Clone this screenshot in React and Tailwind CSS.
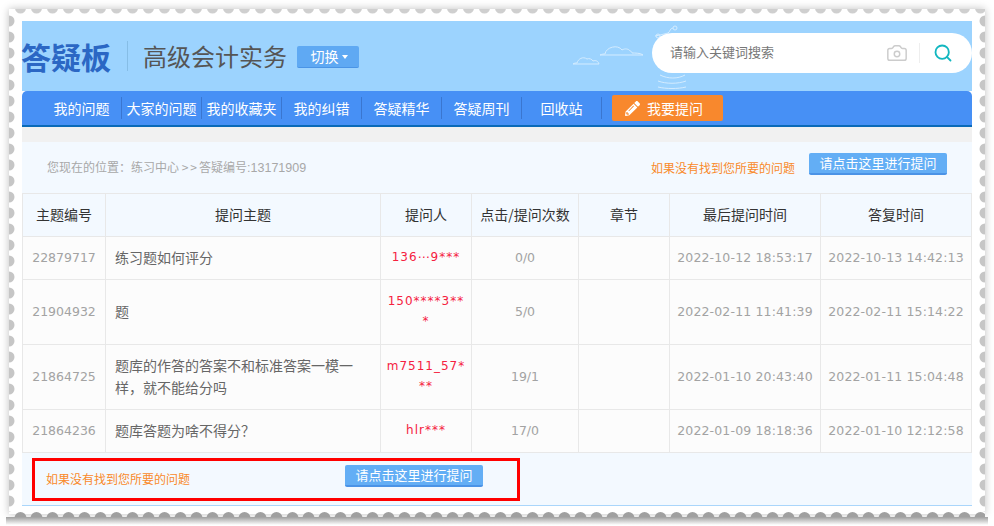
import { Camera, Search } from 'lucide-react';
import { FaPencilAlt } from 'react-icons/fa';

const navItems = ['我的问题', '大家的问题', '我的收藏夹', '我的纠错', '答疑精华', '答疑周刊', '回收站'];

const rows = [
  { id: '22879717', subject: '练习题如何评分', name: '136⋯9***', count: '0/0', asked: '2022-10-12 18:53:17', replied: '2022-10-13 14:42:13', height: 'h-[43px]' },
  { id: '21904932', subject: '题', name: '150****3***', count: '5/0', asked: '2022-02-11 11:41:39', replied: '2022-02-11 15:14:22', height: 'h-[65px]' },
  { id: '21864725', subject: '题库的作答的答案不和标准答案一模一样，就不能给分吗', name: 'm7511_57***', count: '19/1', asked: '2022-01-10 20:43:40', replied: '2022-01-11 15:04:48', height: 'h-[65px]' },
  { id: '21864236', subject: '题库答题为啥不得分？', name: 'hlr***', count: '17/0', asked: '2022-01-09 18:18:36', replied: '2022-01-10 12:12:58', height: 'h-[43px]' },
];

const headers = [
  ['主题编号', 'w-[83px]'],
  ['提问主题', 'w-[275px]'],
  ['提问人', 'w-[91px]'],
  ['点击/提问次数', 'w-[107px]'],
  ['章节', 'w-[91px]'],
  ['最后提问时间', 'w-[151px]'],
  ['答复时间', 'w-[151px]'],
];

function AskButton() {
  return (
    <a className="flex h-[22px] w-[138px] items-center justify-center rounded-[2px] border-b-2 border-[#4b93e6] bg-[#63aef5] text-[13px] text-white">
      请点击这里进行提问
    </a>
  );
}

// stamp edge around the screenshot
function StampFrame() {
  const across = Array.from({ length: 61 }, (_, i) => 20.5 + i * 16);
  const down = Array.from({ length: 32 }, (_, i) => 21 + i * 16);
  return (
    <svg className="pointer-events-none absolute inset-0" width="994" height="526">
      <defs>
        <linearGradient id="shade" x1="0" y1="0" x2="0" y2="1">
          <stop offset="0" stopColor="#a0a0a0" />
          <stop offset="1" stopColor="#ffffff" />
        </linearGradient>
        <clipPath id="top"><rect x="9" y="9" width="976" height="8" /></clipPath>
        <clipPath id="side"><rect x="9" y="9" width="976" height="503" /></clipPath>
        <clipPath id="bottom"><rect x="9" y="510" width="976" height="7.5" /></clipPath>
      </defs>
      <g clipPath="url(#top)">
        {across.map((x) => <circle key={x} cx={x} cy="8" r="5.5" fill="#cfcfcf" />)}
      </g>
      <g clipPath="url(#side)">
        {down.map((y) => <circle key={y} cx="9" cy={y} r="5.5" fill="#c6c6c6" />)}
        {down.map((y) => <circle key={y} cx="985" cy={y} r="5.5" fill="#c6c6c6" />)}
      </g>
      <g clipPath="url(#bottom)">
        {across.map((x) => <circle key={x} cx={x} cy="518" r="6" fill="#a0a0a0" />)}
      </g>
      <rect x="6" y="517" width="982" height="8" fill="url(#shade)" />
    </svg>
  );
}

export default function App() {
  return (
    <div className="relative h-[526px] w-[994px] overflow-hidden bg-white font-['Noto_Sans_CJK_SC',sans-serif] text-[14px]">
      <div className="absolute left-[9px] top-[9px] h-[505px] w-[976px] shadow-[0_0_8px_rgba(0,0,0,0.25)]" />
      <div className="relative ml-[22px] w-[950px] pt-[21px]">
        <header className="relative flex h-[70px] items-center bg-[#9cd3fe]">
          <svg className="absolute left-[550px] top-[2px]" width="130" height="68" fill="none" stroke="#d4ecff" strokeWidth="1">
            <path d="M1 41c1-1 3-1 4-1 1-4 6-7 10-4 2-1 5 0 6 2 3-1 5 0 6 3z" />
            <path d="M28 32c2-1 4-1 5-1 1-7 13-10 17-4 3-2 7-1 8 1 1 0 2 1 2 2 3 0 9 0 11 2z" />
            <path d="M83 13l5-1 8-2c2-1 2-5 5-5M121 14l6-1M88 52c8 4 18 4 25 0M86 58c8 3 20 3 28 0M86 64c8 2 20 2 28 0" />
            <circle cx="86" cy="13" r="2" />
            <circle cx="103" cy="5" r="2" />
          </svg>
          <h1 className="ml-[-1px] text-[30px] font-bold leading-none text-[#2b67c4]">答疑板</h1>
          <span className="ml-[16px] h-[30px] w-px bg-[#86bde6]" />
          <span className="ml-[15px] text-[24px] leading-none text-[#555]">高级会计实务</span>
          <button className="ml-[10px] mt-[2px] flex h-[22px] w-[62px] items-center justify-center gap-[3px] rounded-[2px] border-b border-[#4a94e6] bg-[#5fa9f3] pl-[2px] text-[14px] text-white">
            切换
            <span className="h-0 w-0 border-x-[3.5px] border-t-[4px] border-x-transparent border-t-white" />
          </button>
          <div className="relative mb-[6px] ml-auto flex h-[40px] w-[320px] items-center rounded-[20px] bg-white pl-[18px] pr-[19px]">
            <span className="mb-[2px] text-[13px] text-[#777]">请输入关键词搜索</span>
            <Camera className="ml-auto mr-[-1px] text-[#cccccc]" size={22} strokeWidth={1.6} />
            <span className="ml-[12px] mr-[13px] h-[20px] w-px bg-[#eeeeee]" />
            <Search className="text-[#12b7c0]" size={20} strokeWidth={2.2} />
          </div>
        </header>

        <nav className="flex h-[36px] items-center rounded-t-[5px] border-b-2 border-[#0a6ab8] bg-[#4790f5] pl-[20px]">
          {navItems.map((item) => (
            <a key={item} className="flex h-[22px] w-[80px] items-center justify-center border-r border-[#3a76d0] text-white">
              {item}
            </a>
          ))}
          <button className="ml-[10px] flex h-[26px] w-[111px] items-center justify-start gap-[7px] rounded-[2px] bg-[#f8882d] pl-[13px] text-white">
            <FaPencilAlt size={15} />
            我要提问
          </button>
        </nav>

        <div className="h-[15px] bg-[#f1f1f1]" />

        <div className="flex h-[51px] items-center bg-[#f3f9ff] pl-[25px] pr-[25px] text-[12px]">
          <span className="text-[#a8a8a8]">
            您现在的位置：练习中心 <span className="tracking-[2px]">&gt;&gt;</span>答疑编号<span className="font-['Liberation_Sans',sans-serif] text-[12.5px]">:13171909</span>
          </span>
          <span className="ml-auto text-[#f98a2b]">如果没有找到您所要的问题</span>
          <span className="mb-[7px] ml-[14px]"><AskButton /></span>
        </div>

        <table className="w-[950px] table-fixed border-collapse">
          <thead>
            <tr className="h-[43px] bg-[#f3f9ff]">
              {headers.map(([label, width]) => (
                <th key={label} className={`${width} border border-[#e8e8e8] pb-[1px] font-normal text-[#333]`}>{label}</th>
              ))}
            </tr>
          </thead>
          <tbody className="bg-[#fcfcfc]">
            {rows.map((row) => (
              <tr key={row.id} className={row.height}>
                <td className="border border-[#e8e8e8] text-center font-['DejaVu_Sans',sans-serif] text-[12.5px] text-[#a3a3a3]">{row.id}</td>
                <td className="border border-[#e8e8e8] pb-[2px] pl-[9px] pr-[21px] leading-[22px] text-[#666]">{row.subject}</td>
                <td className="break-all border border-[#e8e8e8] px-[5px] pb-[2px] text-center font-['DejaVu_Sans',sans-serif] text-[12px] leading-[20px] tracking-[1px] text-[#f5213f]">{row.name}</td>
                <td className="border border-[#e8e8e8] text-center font-['DejaVu_Sans',sans-serif] text-[12.5px] text-[#a3a3a3]">{row.count}</td>
                <td className="border border-[#e8e8e8]" />
                <td className="border border-[#e8e8e8] text-center font-['DejaVu_Sans',sans-serif] text-[12.5px] tracking-[0.15px] text-[#a3a3a3]">{row.asked}</td>
                <td className="border border-[#e8e8e8] text-center font-['DejaVu_Sans',sans-serif] text-[12.5px] tracking-[0.15px] text-[#a3a3a3]">{row.replied}</td>
              </tr>
            ))}
          </tbody>
        </table>

        <div className="relative flex h-[53px] items-start border-b border-[#aad6fb] bg-[#f3f9ff] pl-[24px] text-[12px]">
          <span className="mt-[17px] w-[299px] text-[#f98a2b]">如果没有找到您所要的问题</span>
          <span className="mt-[12px]"><AskButton /></span>
          <div className="absolute left-[10px] top-[5px] h-[43px] w-[488px] border-[3px] border-[#ff0000]" />
        </div>
      </div>
      <StampFrame />
    </div>
  );
}
